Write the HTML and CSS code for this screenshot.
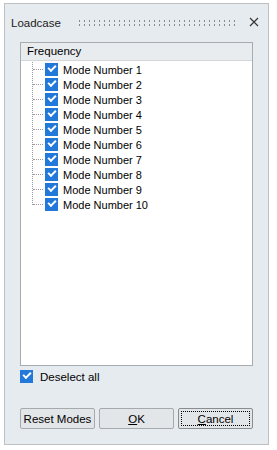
FILE: index.html
```html
<!DOCTYPE html>
<html lang="en">
<head>
<meta charset="UTF-8">
<meta name="viewport" content="width=device-width, initial-scale=1.0">
<title>Loadcase</title>
<link rel="stylesheet" href="styles.css">
</head>
<body>
    <div class="panel">
        <div class="titlebar">
            <span class="title">Loadcase</span>
            <span class="grip"></span>
            <svg class="close" width="10" height="10" viewBox="0 0 10 10">
                <path d="M1 1 L9 9 M9 1 L1 9" stroke="#333" stroke-width="1.1" fill="none"/>
            </svg>
        </div>

        <div class="list">
            <div class="list-header">Frequency</div>
            <div class="tree">
                <div class="tree-line"></div>
                <div class="row"><span class="branch"></span><span class="check"></span>Mode Number 1</div>
                <div class="row"><span class="branch"></span><span class="check"></span>Mode Number 2</div>
                <div class="row"><span class="branch"></span><span class="check"></span>Mode Number 3</div>
                <div class="row"><span class="branch"></span><span class="check"></span>Mode Number 4</div>
                <div class="row"><span class="branch"></span><span class="check"></span>Mode Number 5</div>
                <div class="row"><span class="branch"></span><span class="check"></span>Mode Number 6</div>
                <div class="row"><span class="branch"></span><span class="check"></span>Mode Number 7</div>
                <div class="row"><span class="branch"></span><span class="check"></span>Mode Number 8</div>
                <div class="row"><span class="branch"></span><span class="check"></span>Mode Number 9</div>
                <div class="row"><span class="branch"></span><span class="check"></span>Mode Number 10</div>
            </div>
        </div>

        <div class="deselect"><span class="check"></span>Deselect all</div>

        <div class="buttons">
            <button class="button">Reset Modes</button>
            <button class="button"><u>O</u>K</button>
            <button class="button focused"><span class="focus"><u>C</u>ancel</span></button>
        </div>
    </div>
</body>
</html>
```

FILE: styles.css
```css
body {
    margin: 0;
    background-color: #fff;
    font-family: "Segoe UI", "Liberation Sans", Arial, sans-serif;
    font-size: 11px;
    color: #000;
}
.panel {
    box-sizing: border-box;
    width: 265px;
    height: 442px;
    margin: 3px 0 0 4px;
    border: 1px solid #bcc0c4;
    background-color: #e6ebef;
    padding: 0 15px 15px 15px;
    display: flex;
    flex-direction: column;
}
.titlebar {
    height: 38px;
    margin: 0 -15px;
    padding: 0 9px 0 6px;
    display: flex;
    align-items: center;
}
.title {
    font-size: 11.5px;
    color: #222;
    margin-top: -1px;
}
.grip {
    flex: 1;
    height: 8px;
    margin: 0 12px 0 16px;
    background-image: radial-gradient(circle, #8a8a8a 0.9px, transparent 1.1px);
    background-size: 5px 4px;
    background-position: 0 0;
}
.close {
    display: block;
    margin-top: -2px;
}
.list {
    flex: 1;
    background-color: #fff;
    border: 1px solid #a9acaf;
    display: flex;
    flex-direction: column;
}
.list-header {
    height: 18px;
    line-height: 17px;
    padding-left: 6px;
    background-color: #e8ecef;
    border-bottom: 1px solid #d4d7da;
    box-sizing: border-box;
    font-size: 11.5px;
}
.tree {
    position: relative;
    padding-top: 1px;
}
.tree-line {
    position: absolute;
    left: 11px;
    top: 1px;
    height: 143px;
    border-left: 1px dotted #9a9a9a;
}
.row {
    height: 15px;
    display: flex;
    align-items: center;
    padding-left: 12px;
}
.branch {
    width: 10px;
    border-top: 1px dotted #9a9a9a;
    margin-right: 2px;
}
.check {
    box-sizing: border-box;
    width: 13px;
    height: 13px;
    background-color: #2279da;
    margin-right: 5px;
    position: relative;
    flex: none;
}
.check::after {
    content: "";
    position: absolute;
    left: 3px;
    top: 2px;
    width: 6px;
    height: 3px;
    border-left: 2px solid #fff;
    border-bottom: 2px solid #fff;
    transform: rotate(-45deg);
    transform-origin: center;
}
.deselect {
    margin-top: 4px;
    height: 13px;
    display: flex;
    align-items: center;
    font-size: 11.5px;
}
.deselect .check {
    margin-right: 7px;
}
.buttons {
    margin-top: 25px;
    display: flex;
    gap: 4px;
}
.button {
    box-sizing: border-box;
    width: 75px;
    height: 21px;
    padding: 0;
    font-family: inherit;
    font-size: 11.5px;
    color: #000;
    background-color: #e3e6e9;
    border: 1px solid #a7aaad;
    border-radius: 2px;
}
.focused {
    padding: 2px;
    border-color: #8a8d90;
}
.focus {
    display: flex;
    align-items: center;
    justify-content: center;
    height: 100%;
    border: 1px dotted #000;
    box-sizing: border-box;
}
```
